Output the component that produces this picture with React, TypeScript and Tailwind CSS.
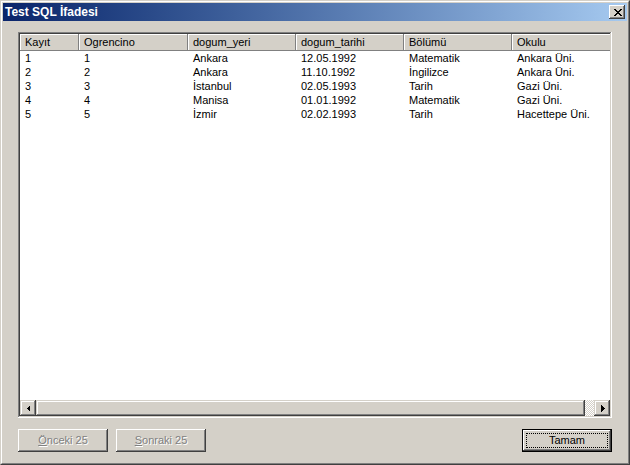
import React from "react";

const columns = [
  { name: "Kayıt", width: "w-[59px]" },
  { name: "Ogrencino", width: "w-[109px]" },
  { name: "dogum_yeri", width: "w-[108px]" },
  { name: "dogum_tarihi", width: "w-[108px]" },
  { name: "Bölümü", width: "w-[108px]" },
  { name: "Okulu", width: "w-[108px]" },
];

const rows = [
  ["1", "1", "Ankara", "12.05.1992", "Matematik", "Ankara Üni."],
  ["2", "2", "Ankara", "11.10.1992", "İngilizce", "Ankara Üni."],
  ["3", "3", "İstanbul", "02.05.1993", "Tarih", "Gazi Üni."],
  ["4", "4", "Manisa", "01.01.1992", "Matematik", "Gazi Üni."],
  ["5", "5", "İzmir", "02.02.1993", "Tarih", "Hacettepe Üni."],
];

const raised =
  "shadow-[inset_-1px_-1px_#404040,inset_1px_1px_#d4d0c8,inset_-2px_-2px_#808080,inset_2px_2px_#ffffff]";

function CloseGlyph() {
  // classic 8x7 pixel X
  const px = [
    [0, 0], [1, 0], [6, 0], [7, 0],
    [1, 1], [2, 1], [5, 1], [6, 1],
    [2, 2], [3, 2], [4, 2], [5, 2],
    [3, 3], [4, 3],
    [2, 4], [3, 4], [4, 4], [5, 4],
    [1, 5], [2, 5], [5, 5], [6, 5],
    [0, 6], [1, 6], [6, 6], [7, 6],
  ];
  return (
    <svg width="8" height="7" viewBox="0 0 8 7" shapeRendering="crispEdges">
      {px.map(([x, y], i) => (
        <rect key={i} x={x} y={y} width="1" height="1" fill="#000" />
      ))}
    </svg>
  );
}

function Arrow({ dir }: { dir: "left" | "right" }) {
  const points = dir === "left" ? "4,0 4,7 0.5,3.5" : "0,0 0,7 3.5,3.5";
  return (
    <svg width="4" height="7" viewBox="0 0 4 7" shapeRendering="crispEdges">
      <polygon points={points} fill="#000" />
    </svg>
  );
}

export default function App() {
  return (
    <div className="w-[630px] h-[465px] border border-t-[#d4d0c8] border-l-[#d4d0c8] border-r-[#404040] border-b-[#404040] bg-[#d4d0c8] font-['Liberation_Sans',Arial,sans-serif] text-[11px] text-black">
      <div className="h-full border border-t-white border-l-white border-r-[#808080] border-b-[#808080] p-px flex flex-col">
        {/* caption */}
        <div className="h-[18px] flex items-center bg-gradient-to-r from-[#0a246a] to-[#a6caf0] pl-[2px] pr-[2px]">
          <span className="font-bold text-white text-[12px] leading-none">Test SQL İfadesi</span>
          <div className="ml-auto w-[16px] h-[14px] bg-[#d4d0c8] flex items-center justify-center pl-px shadow-[inset_-1px_-1px_#404040,inset_1px_1px_#ffffff,inset_-2px_-2px_#808080,inset_2px_2px_#d4d0c8]">
            <CloseGlyph />
          </div>
        </div>

        {/* client area */}
        <div className="flex-1 flex flex-col px-[15px] pt-[11px] pb-[10px]">
          <div className="h-[386px] p-[2px] bg-white flex flex-col shadow-[inset_-1px_-1px_#ffffff,inset_1px_1px_#808080,inset_-2px_-2px_#d4d0c8,inset_2px_2px_#404040]">
            <div className="h-[17px] flex overflow-hidden bg-[#d4d0c8]">
              {columns.map((col) => (
                <div
                  key={col.name}
                  className={`${col.width} shrink-0 h-full flex items-center pl-[5px] shadow-[inset_-1px_-1px_#808080,inset_1px_1px_#ffffff]`}
                >
                  {col.name}
                </div>
              ))}
            </div>
            <div className="flex-1 overflow-hidden">
              {rows.map((row, i) => (
                <div key={i} className="h-[14px] flex leading-[14px]">
                  {row.map((cell, j) => (
                    <div key={j} className={`${columns[j].width} shrink-0 pl-[5px] whitespace-nowrap`}>
                      {cell}
                    </div>
                  ))}
                </div>
              ))}
            </div>
            {/* horizontal scrollbar */}
            <div className="h-[16px] flex">
              <div className={`w-[16px] h-full bg-[#d4d0c8] flex items-center justify-center ${raised}`}>
                <Arrow dir="left" />
              </div>
              <div className={`w-[549px] h-full bg-[#d4d0c8] ${raised}`}></div>
              <div className="flex-1 h-full bg-[repeating-conic-gradient(#ffffff_0%_25%,#d4d0c8_0%_50%)] bg-[length:2px_2px]"></div>
              <div className={`w-[16px] h-full bg-[#d4d0c8] flex items-center justify-center pl-px ${raised}`}>
                <Arrow dir="right" />
              </div>
            </div>
          </div>

          <div className="mt-[11px] flex h-[23px]">
            <div className="w-[90px] h-full flex items-center justify-center text-[#808080] [text-shadow:1px_1px_#ffffff] shadow-[inset_-1px_-1px_#404040,inset_1px_1px_#ffffff,inset_-2px_-2px_#808080,inset_2px_2px_#d4d0c8]">
              <span>
                <span className="underline">Ö</span>nceki 25
              </span>
            </div>
            <div className="ml-[8px] w-[90px] h-full flex items-center justify-center text-[#808080] [text-shadow:1px_1px_#ffffff] shadow-[inset_-1px_-1px_#404040,inset_1px_1px_#ffffff,inset_-2px_-2px_#808080,inset_2px_2px_#d4d0c8]">
              <span>
                <span className="underline">S</span>onraki 25
              </span>
            </div>
            <div className="ml-auto w-[90px] h-full border border-black p-[3px] flex shadow-[inset_-1px_-1px_#404040,inset_1px_1px_#ffffff,inset_-2px_-2px_#808080]">
              <div className="flex-1 border border-dotted border-black flex items-center justify-center">
                Tamam
              </div>
            </div>
          </div>
        </div>
      </div>
    </div>
  );
}
